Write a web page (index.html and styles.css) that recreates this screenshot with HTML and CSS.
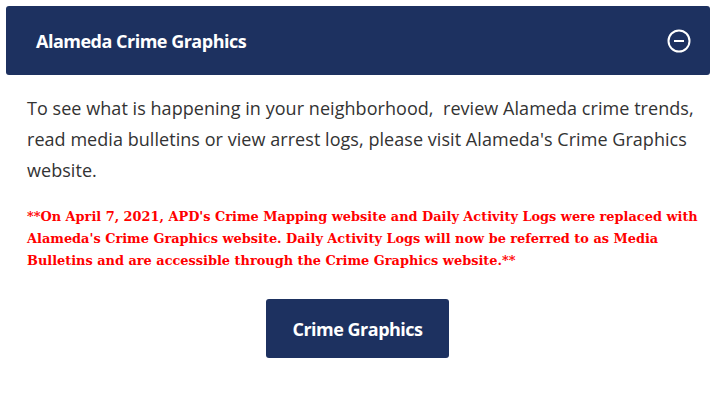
FILE: index.html
```html
<!DOCTYPE html>
<html lang="en">
<head>
<meta charset="utf-8">
<title>Alameda Crime Graphics</title>
<link rel="stylesheet" href="styles.css">
</head>
<body>
<div class="page">
  <div class="accordion-header">
    <h2 class="accordion-title">Alameda Crime Graphics</h2>
    <svg class="toggle-icon" width="24" height="24" viewBox="0 0 24 24" aria-hidden="true">
      <circle cx="12" cy="12" r="10.5" fill="none" stroke="#fff" stroke-width="2"/>
      <line x1="7" y1="12" x2="17" y2="12" stroke="#fff" stroke-width="2"/>
    </svg>
  </div>
  <div class="accordion-body">
    <p class="intro">To see what is happening in your neighborhood,&nbsp; review Alameda crime trends, read media bulletins or view arrest logs, please visit Alameda's Crime Graphics website.</p>
    <p class="notice">**On April 7, 2021, APD's Crime Mapping website and Daily Activity Logs were replaced with Alameda's Crime Graphics website. Daily Activity Logs will now be referred to as Media Bulletins and are accessible through the Crime Graphics website.**</p>
    <div class="button-row">
      <a class="btn" href="#">Crime Graphics</a>
    </div>
  </div>
</div>
</body>
</html>
```

FILE: styles.css
```css
html, body {
  margin: 0;
  padding: 0;
  background: #fff;
}

.page {
  padding: 6px 7px 0 6px;
  font-family: "Open Sans", "Lato", sans-serif;
}

.accordion-header {
  display: flex;
  align-items: center;
  justify-content: space-between;
  height: 69px;
  box-sizing: border-box;
  padding: 0 19px 0 30px;
  background: #1d3160;
  border-radius: 3px;
}

.accordion-title {
  margin: 0;
  color: #fff;
  font-size: 18px;
  font-weight: 700;
  letter-spacing: -0.5px;
}

.toggle-icon {
  display: block;
}

.accordion-body {
  padding: 18px 12px 0 21px;
}

.intro {
  margin: 0;
  color: #333;
  font-size: 18px;
  line-height: 31px;
  letter-spacing: 0.05px;
}

.notice {
  margin: 20px 0 0;
  color: #f00;
  font-family: "DejaVu Serif", serif;
  font-size: 12.9px;
  font-weight: 700;
  line-height: 22px;
}

.button-row {
  display: flex;
  justify-content: center;
  padding-top: 27px;
  padding-right: 10px;
}

.btn {
  display: flex;
  align-items: center;
  justify-content: center;
  width: 183px;
  height: 59px;
  background: #1d3160;
  color: #fff;
  border-radius: 3px;
  text-decoration: none;
  font-size: 18px;
  font-weight: 700;
  letter-spacing: -0.5px;
}
```
